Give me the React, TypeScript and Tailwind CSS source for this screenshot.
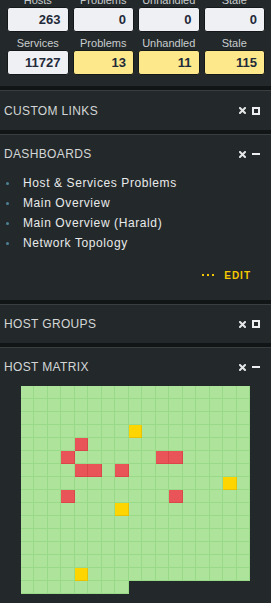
import React from 'react';

const stats = [
  [
    { label: 'Hosts', value: '263', warn: false },
    { label: 'Problems', value: '0', warn: false },
    { label: 'Unhandled', value: '0', warn: false },
    { label: 'Stale', value: '0', warn: false },
  ],
  [
    { label: 'Services', value: '11727', warn: false },
    { label: 'Problems', value: '13', warn: true },
    { label: 'Unhandled', value: '11', warn: true },
    { label: 'Stale', value: '115', warn: true },
  ],
];

const dashboards = ['Host & Services Problems', 'Main Overview', 'Main Overview (Harald)', 'Network Topology'];

// row * 17 + col
const red = new Set([4 * 17 + 4, 5 * 17 + 3, 5 * 17 + 10, 5 * 17 + 11, 6 * 17 + 4, 6 * 17 + 5, 6 * 17 + 7, 8 * 17 + 3, 8 * 17 + 11]);
const yellow = new Set([3 * 17 + 8, 7 * 17 + 15, 9 * 17 + 7, 14 * 17 + 4]);

function CloseIcon() {
  return (
    <svg width="7" height="7" viewBox="0 0 7 7">
      <path d="M1 1L6 6M6 1L1 6" stroke="#e4e6e7" strokeWidth="2" strokeLinecap="square" />
    </svg>
  );
}

function PanelHeader({ title, open, tall }: { title: string; open: boolean; tall?: boolean }) {
  return (
    <div className="border-t-4 border-[#121516]">
      <div
        className={`border-t border-[#393f40] flex items-center justify-between pl-[4px] pr-[11px] ${
          tall ? 'h-[40px]' : 'h-[39px]'
        }`}
      >
        <span className="text-[12px] tracking-[0.35px] text-[#d3d6d7] uppercase">{title}</span>
        <div className="flex items-center gap-[6px]">
          <CloseIcon />
          {open ? (
            <div className="w-[8px] h-[2px] bg-[#eceeef]" />
          ) : (
            <div className="w-[8px] h-[8px] border-2 border-[#eceeef]" />
          )}
        </div>
      </div>
    </div>
  );
}

export default function App() {
  return (
    <div className="w-[271px] h-[603px] overflow-hidden bg-[#23292a] font-['Liberation_Sans',Arial,sans-serif]">
      {/* stats */}
      <div className="mt-[-7px] pl-[7px] pr-[6px] pb-[11px] grid grid-cols-4 gap-x-[4px] gap-y-[4px]">
        {stats.flat().map((s, i) => (
          <div key={i} className="flex flex-col">
            <div className="h-[14px] leading-[14px] text-center text-[11px] text-[#c9cccf]">{s.label}</div>
            <div
              className={`h-[25px] rounded-[3px] border border-[#151819] flex items-center justify-end pr-[7px] text-[13px] font-bold text-[#1f2a3a] ${
                s.warn ? 'bg-[#fde98b]' : 'bg-[#eff0f4]'
              }`}
            >
              {s.value}
            </div>
          </div>
        ))}
      </div>

      <PanelHeader title="Custom Links" open={false} tall />

      <PanelHeader title="Dashboards" open />
      <div className="pb-[15px]">
        <ul>
          {dashboards.map((d) => (
            <li key={d} className="h-[20px] flex items-center">
              <span className="ml-[6px] w-[3px] h-[3px] rounded-full bg-[#4d8196]" />
              <span className="ml-[14px] text-[12px] tracking-[0.6px] text-[#e9eaeb]">{d}</span>
            </li>
          ))}
        </ul>
        <div className="mt-[12px] h-[20px] flex items-center justify-end pr-[20px]">
          <div className="flex gap-[3px] mr-[10px]">
            <span className="w-[2px] h-[2px] bg-[#f2c500]" />
            <span className="w-[2px] h-[2px] bg-[#f2c500]" />
            <span className="w-[2px] h-[2px] bg-[#f2c500]" />
          </div>
          <span className="text-[10px] font-bold tracking-[1px] text-[#f5c800]">EDIT</span>
        </div>
      </div>

      <PanelHeader title="Host Groups" open={false} />

      <PanelHeader title="Host Matrix" open />
      <div className="flex justify-center">
        <div className="w-[230px] grid grid-cols-[repeat(17,minmax(0,1fr))]">
          {Array.from({ length: 263 }).map((_, i) => (
            <div
              key={i}
              className={`h-[13px] border-r border-b ${
                red.has(i)
                  ? 'bg-[#e85457] border-[#d9474a]'
                  : yellow.has(i)
                  ? 'bg-[#ffd500] border-[#e8c200]'
                  : 'bg-[#aee39c] border-[#98da87]'
              }`}
            />
          ))}
        </div>
      </div>
    </div>
  );
}
